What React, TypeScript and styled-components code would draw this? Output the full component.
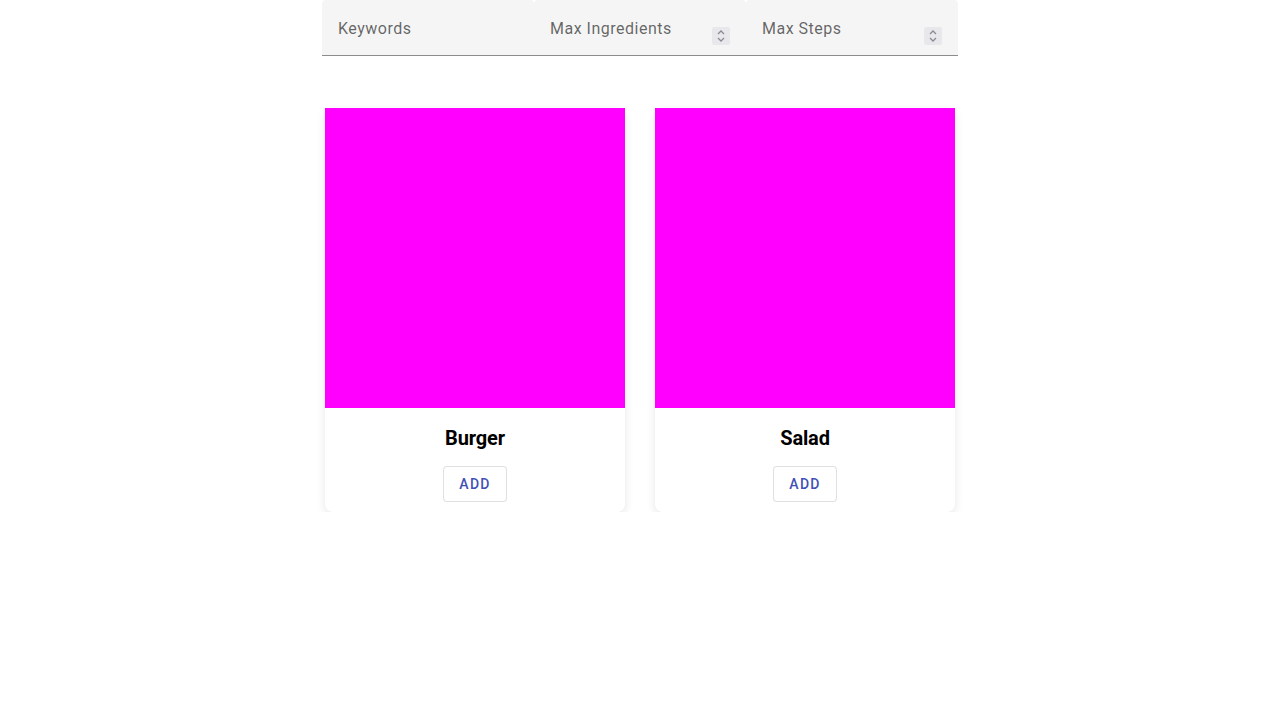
import React from 'react';
import styled, { createGlobalStyle } from 'styled-components';

const GlobalStyle = createGlobalStyle`
  html, body {
    margin: 0;
    padding: 0;
    background: #ffffff;
    font-family: Roboto, "Liberation Sans", sans-serif;
  }
`;

const Page = styled.div`
  width: 636px;
  margin: 0 auto;
`;

const SearchBar = styled.form`
  display: flex;
  margin: 0;
`;

const Field = styled.label`
  position: relative;
  display: flex;
  align-items: center;
  width: 212px;
  height: 56px;
  box-sizing: border-box;
  padding: 0 16px;
  background: #f5f5f5;
  border-radius: 4px 4px 0 0;
  border-bottom: 1px solid #8c8c8c;
`;

const FieldLabel = styled.span`
  position: absolute;
  left: 16px;
  top: 19px;
  font-size: 16px;
  line-height: 20px;
  letter-spacing: 0.5px;
  color: rgba(0, 0, 0, 0.6);
  pointer-events: none;
`;

const Input = styled.input`
  width: 100%;
  height: 28px;
  margin-top: 17px;
  padding: 0;
  border: none;
  outline: none;
  background: transparent;
  font-family: inherit;
  font-size: 16px;
  color: rgba(0, 0, 0, 0.87);
`;

const Spinner = styled.span`
  position: absolute;
  right: 16px;
  top: 27px;
  width: 18px;
  height: 18px;
  background: #e8e8ec;
  border-radius: 2px;
  display: flex;
  align-items: center;
  justify-content: center;
`;

const CardGrid = styled.div`
  display: flex;
  gap: 30px;
  padding: 52px 3px 0;
`;

const Card = styled.div`
  width: 300px;
  background: #ffffff;
  border-radius: 8px;
  box-shadow: 0 3px 10px rgba(0, 0, 0, 0.1);
  display: flex;
  flex-direction: column;
  align-items: center;
  padding-bottom: 10px;
`;

const Picture = styled.div`
  width: 300px;
  height: 300px;
  background: #ff00ff;
`;

const Title = styled.h2`
  margin: 18px 0 16px;
  font-size: 20px;
  line-height: 24px;
  font-weight: 700;
  letter-spacing: -0.15px;
  color: #000000;
`;

const AddButton = styled.button`
  width: 64px;
  height: 36px;
  background: #ffffff;
  border: 1px solid rgba(0, 0, 0, 0.12);
  border-radius: 4px;
  font-family: inherit;
  font-size: 14px;
  font-weight: 500;
  letter-spacing: 1.25px;
  color: #3f51b5;
  cursor: pointer;
`;

const SpinIcon = () => (
  <svg width="10" height="14" viewBox="0 0 10 14" fill="none" stroke="#8a8a90" strokeWidth="1.3">
    <path d="M2 5 L5 2 L8 5" />
    <path d="M2 9 L5 12 L8 9" />
  </svg>
);

const fields = [
  { name: 'keywords', label: 'Keywords', number: false },
  { name: 'maxIngredients', label: 'Max Ingredients', number: true },
  { name: 'maxSteps', label: 'Max Steps', number: true },
];

const recipes = ['Burger', 'Salad'];

export default function App() {
  return (
    <>
      <GlobalStyle />
      <Page>
        <SearchBar>
          {fields.map((f) => (
            <Field key={f.name}>
              <FieldLabel>{f.label}</FieldLabel>
              <Input name={f.name} type="text" />
              {f.number && (
                <Spinner>
                  <SpinIcon />
                </Spinner>
              )}
            </Field>
          ))}
        </SearchBar>
        <CardGrid>
          {recipes.map((r) => (
            <Card key={r}>
              <Picture />
              <Title>{r}</Title>
              <AddButton type="button">ADD</AddButton>
            </Card>
          ))}
        </CardGrid>
      </Page>
    </>
  );
}
